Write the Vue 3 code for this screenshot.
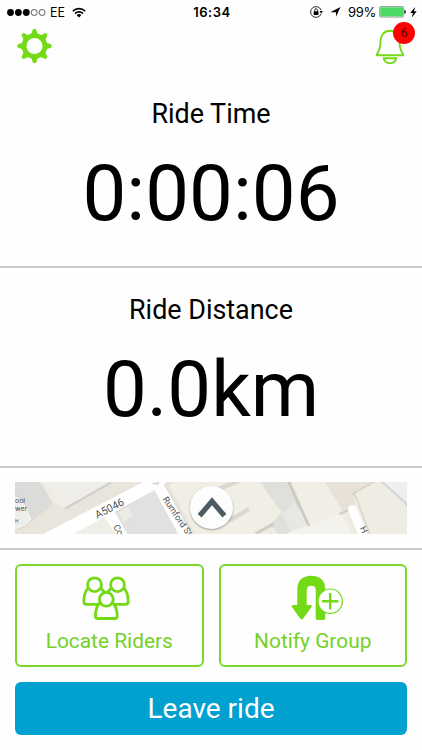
<script setup>
import { ref } from "vue";

const rideTime = ref("0:00:06");
const rideDistance = ref("0.0km");
const notifications = ref(6);
const battery = ref(99);
const teeth = [0, 45, 90, 135, 180, 225, 270, 315];
</script>

<template>
  <main>
    <div class="status-bar">
      <div class="status-left">
        <svg class="signal" width="39" height="9" viewBox="0 0 39 9">
          <circle cx="3.5" cy="4.5" r="3.4" />
          <circle cx="11.4" cy="4.5" r="3.4" />
          <circle cx="19.3" cy="4.5" r="3.4" />
          <circle cx="27.2" cy="4.5" r="3" class="hollow" />
          <circle cx="35.1" cy="4.5" r="3" class="hollow" />
        </svg>
        <span class="carrier">EE</span>
        <svg width="14" height="11" viewBox="0 0 14 11">
          <path class="wifi" d="M.8 4.2a8.8 8.8 0 0 1 12.4 0M3 6.6a5.6 5.6 0 0 1 8 0" />
          <path d="M4.7 8.2a3.3 3.3 0 0 1 4.6 0L7 10.6z" />
        </svg>
      </div>
      <span class="clock">16:34</span>
      <div class="status-right">
        <svg class="lock" width="13" height="12" viewBox="0 0 13 12">
          <path class="thin" d="M11.1 4.2A5.4 5.4 0 1 0 11.1 7.8" />
          <path d="M9.4 5h3.6l-1.8 2.6z" />
          <rect x="3.7" y="5.3" width="4.8" height="3.6" rx=".5" />
          <path class="thin" d="M4.7 5.5V4.2a1.4 1.4 0 0 1 2.8 0v1.3" />
        </svg>
        <svg class="arrow" width="11" height="10" viewBox="0 0 11 10">
          <path d="M10.5 0L6 9.8V5.3H.3z" />
        </svg>
        <span class="percent">{{ battery }}%</span>
        <svg class="battery" width="28" height="12" viewBox="0 0 28 12">
          <rect x=".5" y=".5" width="24.2" height="10.6" rx="1.5" class="shell" />
          <rect x="1.2" y="1.2" width="22.8" height="9.2" rx=".6" class="charge" />
          <path d="M25.4 3.7q1.4.4 1.4 2.1t-1.4 2.1z" />
        </svg>
        <svg class="bolt" width="7" height="11" viewBox="0 0 7 11">
          <path d="M5 0L.2 6h2.6L1.9 10.6 6.7 4.3H4z" />
        </svg>
      </div>
    </div>

    <header>
      <button class="icon-button">
        <svg width="36" height="36" viewBox="-17.5 -18 36 36">
          <circle r="10.4" class="gear-ring" />
          <path
            v-for="angle in teeth"
            :key="angle"
            class="gear-tooth"
            :transform="`rotate(${angle})`"
            d="M-4.8-11Q-2.6-12-2-15.6Q-1.8-17.2 0-17.2T2-15.6Q2.6-12 4.8-11z"
          />
        </svg>
      </button>
      <button class="icon-button bell">
        <svg width="30" height="36" viewBox="0 0 30 36">
          <path d="M15 1.7C9.2 1.7 5.6 6 5.6 11.6C5.6 18.3 5 21 1.9 25.2Q1.4 26.3 2.8 26.3H27.2Q28.6 26.3 28.1 25.2C25 21 24.4 18.3 24.4 11.6C24.4 6 20.8 1.7 15 1.7z" />
          <path d="M8.8 29.2H21.2Q20.4 34.2 15 34.2T8.8 29.2z" />
        </svg>
        <span class="badge">{{ notifications }}</span>
      </button>
    </header>

    <section class="stat stat-time">
      <h2>Ride Time</h2>
      <p>{{ rideTime }}</p>
    </section>

    <section class="stat stat-distance">
      <h2>Ride Distance</h2>
      <p>{{ rideDistance }}</p>
    </section>

    <section class="map-section">
      <div class="map">
        <svg width="392" height="52" viewBox="0 0 1176 156">
          <rect width="1176" height="156" fill="#efece4" />
          <!-- blocks west of the main road -->
          <path fill="#e9e5dc" d="M0 156L0 120L120 65L150 80L290 0H385L85 156z" />
          <path fill="#dbdbd9" d="M0 0H75L116 66L50 118L0 90z" />
          <path fill="#f0eeea" stroke="#d5d3cf" stroke-width="3" d="M-5 38Q28 45 52 112Q40 135-5 146z" />
          <path fill="#f0eee9" d="M82 0H285L152 74z" />
          <path stroke="#d1d0ce" stroke-width="7" d="M150 80L289 1" />
          <!-- roads -->
          <path fill="#fff" d="M85 156L385 0H460L425 22L175 156z" />
          <path fill="#f0efe7" d="M180 156L275 106L312 156z" />
          <path fill="#e1e1e2" d="M295 91L420 24L492 156H334z" />
          <path fill="#ebeae5" stroke="#dcdbd5" stroke-width="2" d="M307 89L340 73L357 102L326 124z" />
          <path fill="#fff" d="M268 106L300 90L337 156H304z" />
          <path fill="#fff" d="M418 24L448 6L531 156H490z" />
          <path stroke="#dfdccf" stroke-width="5" d="M448 5L532 156" />
          <path stroke="#b6c2d7" stroke-width="3" d="M413 4L430 7M420-2L433 3" />
          <!-- blocks east of Rumford Street -->
          <path fill="#e7e3d9" d="M450 0H476L556 130L532 150z" />
          <path fill="#f0eee5" d="M461 9L482 0H738L800 90L728 156H540z" />
          <path stroke="#dad8d0" stroke-width="13" d="M606 23L678-6M638 119L702 81" />
          <path fill="#dfe0dc" d="M735 0H818L858 82L820 125L850 140L820 156H790L765 128L800 91z" />
          <path fill="#e7e7e3" d="M802 94L838 62L875 130L830 150z" />
          <path fill="#f1eee6" d="M826 0H933L980 86L884 132z" />
          <path fill="#e7e1d8" d="M930 0H1080L1020 34L1020 72L985 88z" />
          <path fill="#f3f2ec" d="M850 140L978 93L1012 156H810z" />
          <path stroke="#d1cec5" stroke-width="7" d="M823 0L883 132M724 155L778 126M973 96L1002 84M1012 37L1085-3" />
          <path stroke="#b9b5aa" stroke-width="2" d="M819 0L878 130M720 152L773 124" />
          <path fill="#efede3" stroke="#dbd7c9" stroke-width="5" d="M1018 32L1090-6H1130L1210 130V170H1070z" />
          <path fill="#edeff1" stroke="#d2d1ca" stroke-width="5" d="M1096-5L1182 72V-5z" />
          <path stroke="#fff" stroke-width="26" stroke-linecap="round" d="M1012 82L1050 174" />
          <g class="map-text">
            <text x="0" y="63">ool</text>
            <text x="0" y="88">wer</text>
            <text class="tiny" x="0" y="122">H</text>
            <text class="road-name" transform="translate(247 110) rotate(-27)">A5046</text>
            <text class="street-name" transform="translate(442 52) rotate(56)">Rumford St</text>
            <text class="street-name" transform="translate(294 134) rotate(60)">Co</text>
            <text class="street-name" transform="translate(1034 138) rotate(66)">H</text>
          </g>
        </svg>
        <button class="map-toggle">
          <svg width="30" height="22" viewBox="0 0 30 22">
            <path d="M2.6 18.8L15 4.2L27.4 18.8" />
          </svg>
        </button>
      </div>
    </section>

    <footer>
      <div class="actions">
        <button class="action">
          <svg class="riders-icon" width="48" height="44" viewBox="0 0 48 44">
            <g class="rider">
              <path d="M7 11C3.4 14.5 1.8 19 1.8 25.5Q1.8 28.3 4.4 28.3H19.6Q22.2 28.3 22.2 25.5V16L18 11" />
              <circle cx="12.5" cy="8.7" r="6.9" />
              <path d="M41 11C44.6 14.5 46.2 19 46.2 25.5Q46.2 28.3 43.6 28.3H28.4Q25.8 28.3 25.8 25.5V16L30 11" />
              <circle cx="35.5" cy="8.7" r="6.9" />
              <path d="M18.8 25.8C14.9 29 13.4 32.5 13.4 40Q13.4 42.5 15.8 42.5H32.8Q35.2 42.5 35.2 40C35.2 32.5 33.7 29 29.8 25.8z" />
              <circle cx="24.3" cy="23.3" r="6.9" />
            </g>
          </svg>
          <span>Locate Riders</span>
        </button>
        <button class="action">
          <svg class="notify-icon" width="52" height="46" viewBox="0 0 52 46">
            <path class="turn" d="M6.3 30V14.5C6.3 5.5 11.5.7 20.3.7S34.3 5.5 34.3 14.5V43.2Q34.3 45 32.5 45H26.5Q24.7 45 24.7 43.2V15Q24.7 10.8 20.3 10.8T15.7 15V30H19.5Q21.7 30.1 20.3 32.2L12.2 43.4Q10.7 45.2 9.2 43.4L1.1 32.2Q-.2 30.1 1.9 30z" />
            <circle class="plus-disc" cx="39.2" cy="26.2" r="12.2" />
            <path class="plus" d="M39.2 18v16.4M31 26.2h16.4" />
          </svg>
          <span>Notify Group</span>
        </button>
      </div>
      <button class="leave">Leave ride</button>
    </footer>
  </main>
</template>

<style>
body {
  margin: 0;
  background-color: #fefefe;
}
</style>

<style scoped>
main {
  width: 422px;
  height: 750px;
  overflow: hidden;
  background-color: #fefefe;
  font-family: Roboto, sans-serif;
  color: #000;
}

button {
  padding: 0;
  border: none;
  background: none;
  font-family: inherit;
  cursor: pointer;
}

svg {
  display: block;
}

.status-bar {
  display: grid;
  grid-template-columns: 1fr auto 1fr;
  align-items: center;
  height: 24px;
  padding: 0 5px 0 7px;
  font-family: Inter, sans-serif;
}

.status-left,
.status-right {
  display: flex;
  align-items: center;
}

.status-right {
  justify-content: flex-end;
}

.hollow {
  fill: none;
  stroke: #333;
  stroke-width: 0.8;
}

.carrier {
  margin: 0 7px 0 4px;
  font-size: 12.5px;
}

.wifi {
  fill: none;
  stroke: #000;
  stroke-width: 1.6;
}

.clock {
  font-size: 13px;
  font-weight: 600;
  letter-spacing: 0.5px;
}

.thin {
  fill: none;
  stroke: #111;
  stroke-width: 0.9;
}

.arrow {
  margin-left: 7px;
}

.percent {
  margin: 0 3px 0 7px;
  font-size: 13px;
  letter-spacing: -0.3px;
}

.shell {
  fill: none;
  stroke: #8a8a8a;
  stroke-width: 0.8;
}

.charge {
  fill: #4cd964;
}

.bolt {
  margin-left: 3px;
}

header {
  display: flex;
  justify-content: space-between;
  align-items: flex-start;
  height: 50px;
  padding: 4px 17.5px 0 17px;
  box-sizing: border-box;
}

.gear-ring {
  fill: none;
  stroke: #74d916;
  stroke-width: 4.8;
}

.gear-tooth {
  fill: #74d916;
}

.bell {
  position: relative;
  padding-top: 1px;
}

.bell path {
  fill: none;
  stroke: #74d916;
  stroke-width: 1.9;
}

.badge {
  position: absolute;
  top: -6px;
  right: -10.5px;
  width: 22px;
  height: 22px;
  border-radius: 50%;
  background-color: #fe0000;
  color: #500;
  font-size: 12px;
  line-height: 22px;
}

.stat {
  box-sizing: border-box;
  border-bottom: 2px solid #cbcbcb;
  text-align: center;
}

.stat-time {
  height: 194px;
  padding-top: 24px;
}

.stat-distance {
  height: 200px;
  padding-top: 26px;
}

.stat h2 {
  margin: 0;
  font-size: 26.9px;
  font-weight: 400;
  line-height: 32px;
}

.stat p {
  margin: 18px 0 0;
  font-size: 78px;
  line-height: 92px;
}

.map-section {
  height: 82px;
  padding: 14px 15px 0;
  box-sizing: border-box;
  border-bottom: 2px solid #cbcbcb;
}

.map {
  position: relative;
}

.map-text {
  font-size: 22px;
  fill: #555;
}

.tiny {
  font-size: 14px;
}

.road-name {
  font-size: 32px;
}

.street-name {
  font-size: 27px;
}

.map-toggle {
  position: absolute;
  top: 4px;
  left: 175px;
  display: flex;
  justify-content: center;
  align-items: center;
  width: 43px;
  height: 43px;
  border-radius: 50%;
  background-color: #fdfdfd;
  box-shadow: 0 1px 2px rgba(0, 0, 0, 0.35);
}

.map-toggle path {
  fill: none;
  stroke: #4d5c62;
  stroke-width: 5.2;
}

footer {
  padding: 14px 15px 0;
}

.actions {
  display: grid;
  grid-template-columns: 1fr 1fr;
  gap: 15px;
}

.action {
  display: flex;
  flex-direction: column;
  align-items: center;
  height: 103px;
  padding-top: 9px;
  box-sizing: border-box;
  border: 2px solid #7bd82a;
  border-radius: 6px;
  color: #74d12a;
  font-size: 20.9px;
}

.action svg {
  height: 46px;
}

.riders-icon {
  margin-right: 6px;
}

.notify-icon {
  margin-left: 8px;
}

.action span {
  margin-top: 7px;
  line-height: 26px;
}

.rider * {
  fill: #fefefe;
  stroke: #74d916;
  stroke-width: 2.8;
}

.turn {
  fill: #74d916;
}

.plus-disc {
  fill: #fefefe;
  stroke: #74d916;
  stroke-width: 1.2;
}

.plus {
  stroke: #74d916;
  stroke-width: 2.4;
}

.leave {
  display: block;
  width: 100%;
  height: 53px;
  margin-top: 15px;
  border-radius: 6px;
  background-color: #00a0cf;
  color: #fff;
  font-size: 28px;
  line-height: 53px;
}
</style>
